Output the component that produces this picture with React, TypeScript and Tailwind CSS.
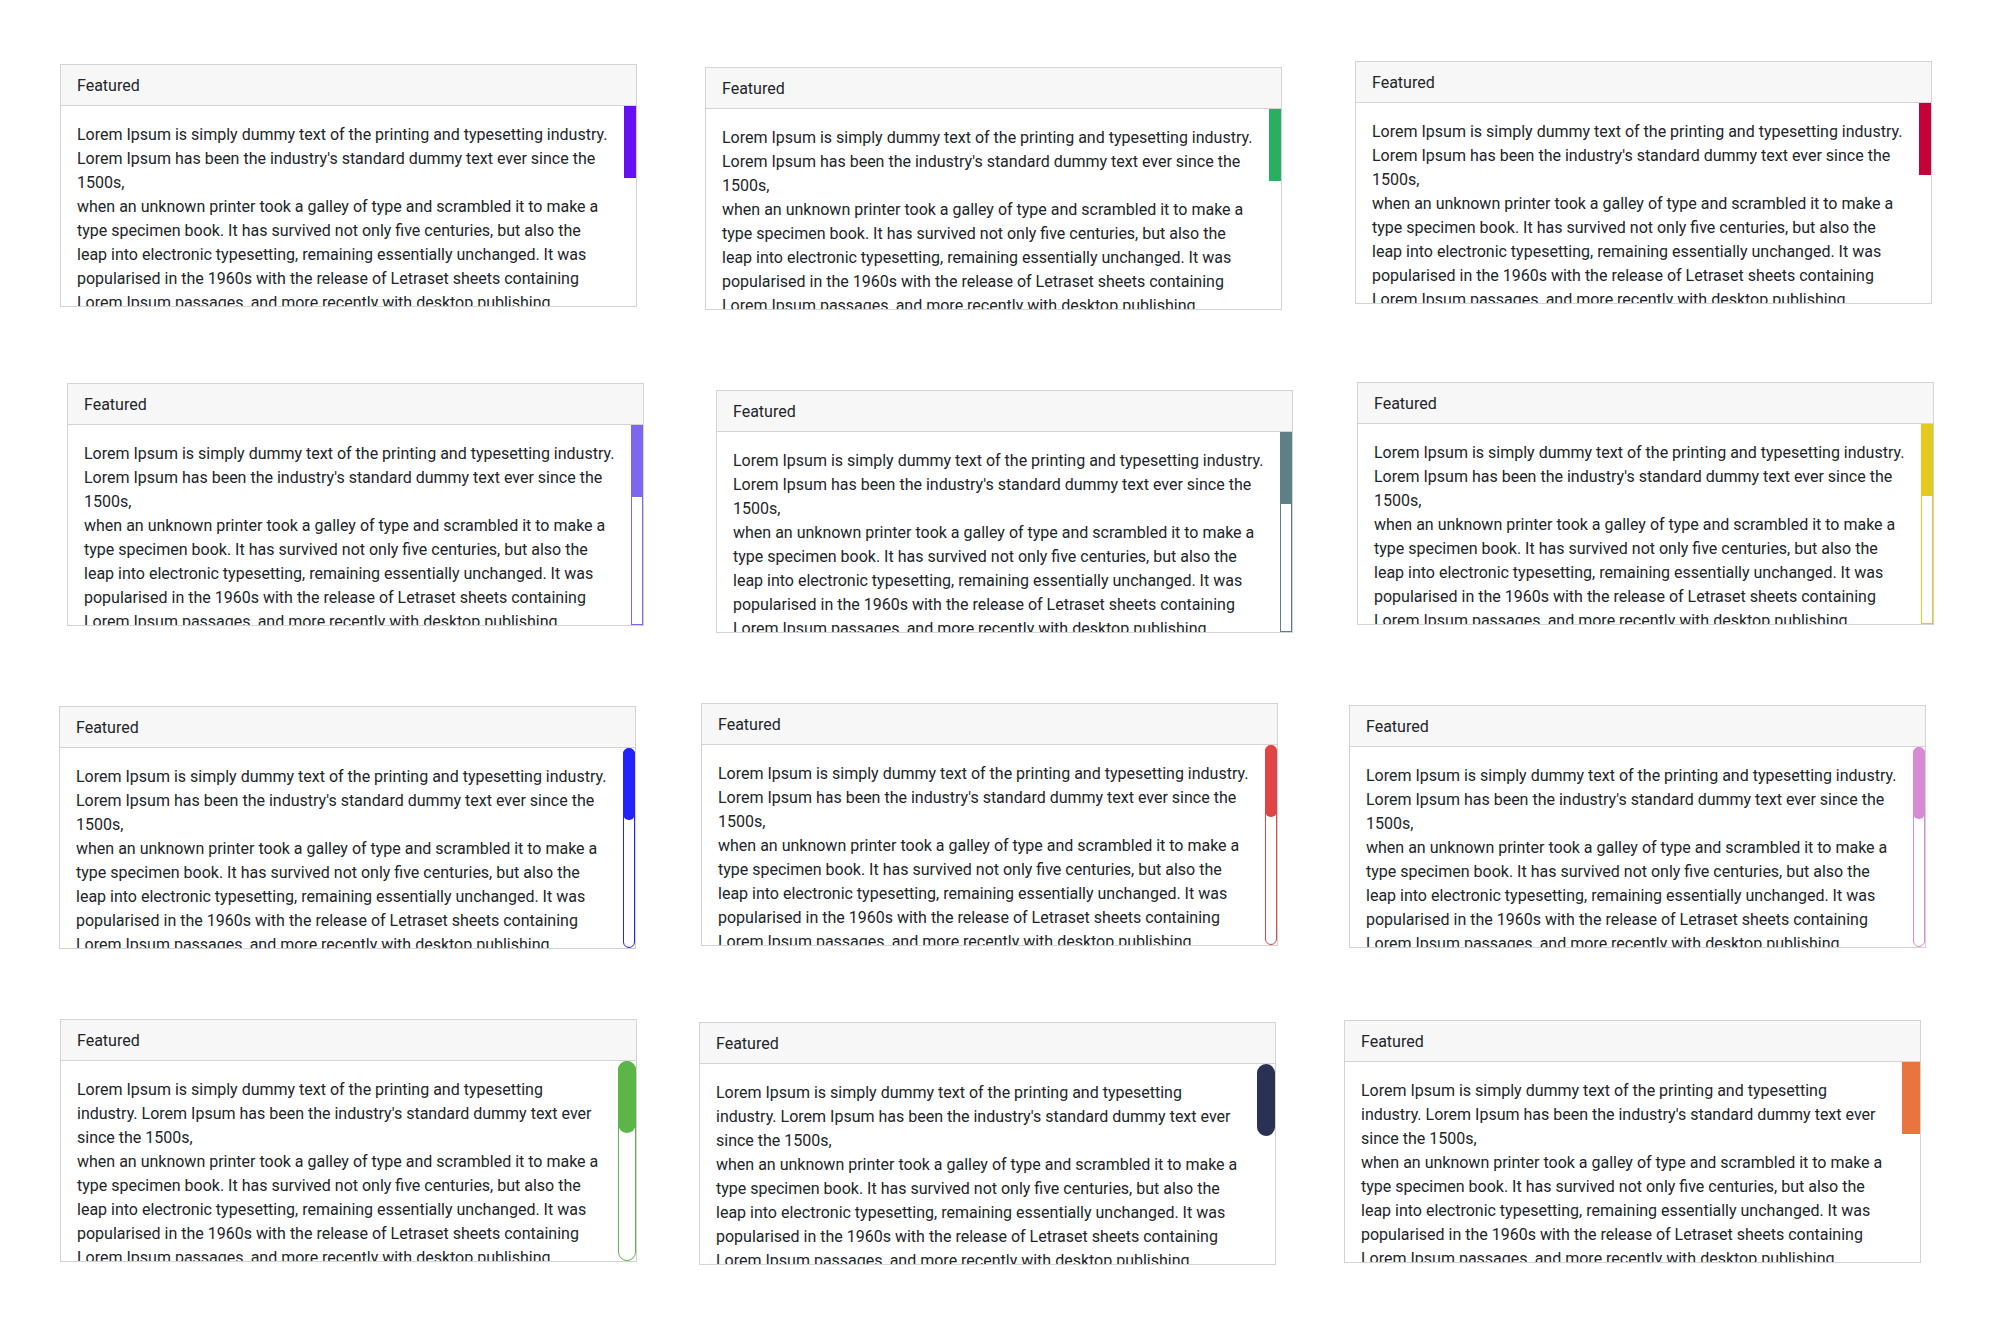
import React from "react";

interface CardSpec {
  box: string;
  bar: string;
  track: string;
  thumb: string;
}

const cards: CardSpec[] = [
  { box: "mt-[64px] ml-[60px]", bar: "w-[12px]", track: "", thumb: "bg-[#6610f2]" },
  { box: "mt-[67px] ml-[39px]", bar: "w-[12px]", track: "", thumb: "bg-[#2aae60]" },
  { box: "mt-[61px] ml-[23px]", bar: "w-[12px]", track: "", thumb: "bg-[#c70039]" },
  { box: "mt-[63px] ml-[67px]", bar: "w-[12px]", track: "border border-[#7b68ee]", thumb: "bg-[#7b68ee]" },
  { box: "mt-[70px] ml-[50px]", bar: "w-[12px]", track: "border border-[#5e7f85]", thumb: "bg-[#5e7f85]" },
  { box: "mt-[62px] ml-[25px]", bar: "w-[12px]", track: "border border-[#e4ca1e]", thumb: "bg-[#e4ca1e]" },
  {
    box: "mt-[66px] ml-[59px]",
    bar: "w-[12px]",
    track: "border border-[#2323ff] rounded-full",
    thumb: "bg-[#2323ff] rounded-full",
  },
  {
    box: "mt-[63px] ml-[35px]",
    bar: "w-[12px]",
    track: "border border-[#e04444] rounded-full",
    thumb: "bg-[#e04444] rounded-full",
  },
  {
    box: "mt-[65px] ml-[17px]",
    bar: "w-[12px]",
    track: "border border-[#d78ad6] rounded-full",
    thumb: "bg-[#d78ad6] rounded-full",
  },
  {
    box: "mt-[59px] ml-[60px]",
    bar: "w-[18px]",
    track: "border border-[#5cb548] rounded-full",
    thumb: "bg-[#5cb548] rounded-full",
  },
  { box: "mt-[62px] ml-[33px]", bar: "w-[18px]", track: "", thumb: "bg-[#2a3152] rounded-full" },
  { box: "mt-[60px] ml-[12px]", bar: "w-[18px]", track: "", thumb: "bg-[#ea7440]" },
];

const Lorem = () => (
  <p className="mb-4">
    Lorem Ipsum is simply dummy text of the printing and typesetting industry. Lorem Ipsum has
    been the industry's standard dummy text ever since the 1500s,
    <br />
    when an unknown printer took a galley of type and scrambled it to make a type specimen book.
    It has survived not only five centuries, but also the leap into electronic typesetting,
    remaining essentially unchanged. It was popularised in the 1960s with the release of Letraset
    sheets containing Lorem Ipsum passages, and more recently with desktop publishing software
    like Aldus PageMaker including versions of Lorem Ipsum.
  </p>
);

const Card: React.FC<CardSpec> = ({ box, bar, track, thumb }) => {
  return (
    <div className={`w-[577px] h-[243px] border border-[#d3d3d3] bg-white flex flex-col ${box}`}>
      <div className="h-[41px] px-4 pt-[9px] pb-[7px] bg-[#f7f7f7] border-b border-[#d3d3d3] leading-6">
        Featured
      </div>
      <div className="h-[200px] flex">
        <div className="flex-1 overflow-hidden px-4 pt-[17px] leading-6">
          <Lorem />
          <Lorem />
        </div>
        {/* scrollbar */}
        <div className={`relative h-full shrink-0 ${bar}`}>
          <div className={`absolute inset-0 ${track}`} />
          <div className={`absolute top-0 left-0 right-0 h-[72px] ${thumb}`} />
        </div>
      </div>
    </div>
  );
};

export default function App() {
  return (
    <div className="w-full min-h-screen bg-white text-[#212529] text-base font-['Roboto',sans-serif]">
      <div className="grid grid-cols-[666px_666px_666px] auto-rows-[320px]">
        {cards.map((c, i) => (
          <div key={i}>
            <Card {...c} />
          </div>
        ))}
      </div>
    </div>
  );
}
